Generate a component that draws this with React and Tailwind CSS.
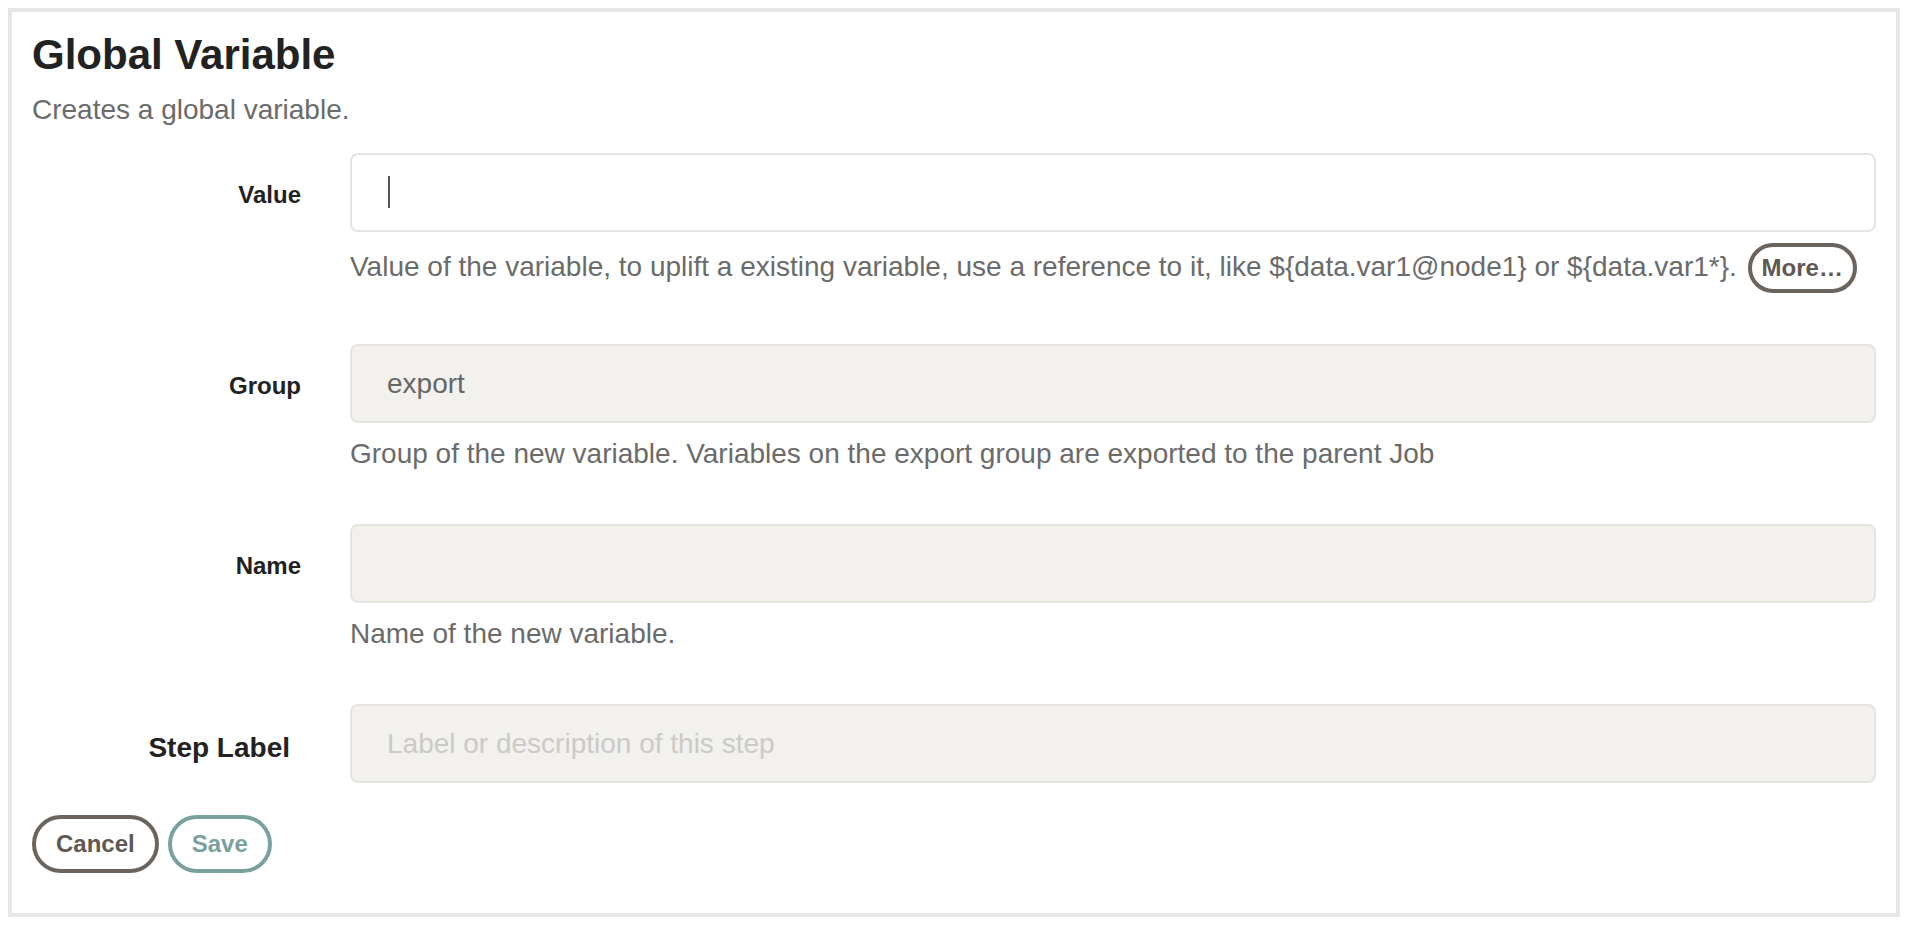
import React from "react";

const FONT = "font-['Liberation_Sans',Arial,sans-serif]";

function Row({ label, labelClass, desc, className = "", children }) {
  return (
    <div className={`flex ${className}`}>
      <div className={`w-[269px] shrink-0 text-right font-bold text-[#222] ${labelClass}`}>{label}</div>
      <div className="ml-[49px] flex-1 min-w-0">
        {children}
        {desc && <div className="mt-[11px] text-[28px] leading-[40px] text-[#6b6b6b]">{desc}</div>}
      </div>
    </div>
  );
}

const inputBase =
  "block w-full h-[79px] rounded-[8px] border-2 border-[#e6e4df] px-[35px] text-[28px] text-[#666] outline-none " +
  FONT;

export default function App() {
  return (
    <div className={`${FONT} bg-white min-h-[926px] pt-[8px] pl-[8px]`}>
      <div className="w-[1892px] h-[909px] border-4 border-[#e6e6e6] px-[20px] pt-[20px]">
        <h1 className="text-[42px] leading-[46px] font-bold text-[#222]">Global Variable</h1>
        <p className="mt-[12px] text-[28px] leading-[40px] text-[#6b6b6b]">Creates a global variable.</p>

        <div className="mt-[23px]">
          <Row
            label="Value"
            labelClass="pt-[27px] text-[24px] leading-[30px]"
            className="mb-[51px]"
            desc={
              <>
                Value of the variable, to uplift a existing variable, use a reference to it, like{" "}
                {"${data.var1@node1}"} or {"${data.var1*}"}.{" "}
                <button className="ml-[3px] inline-block align-baseline rounded-full border-4 border-[#6b645d] px-[10px] py-[6px] text-[24px] leading-[30px] font-bold text-[#5f5852]">
                  More…
                </button>
              </>
            }
          >
            <div className="relative">
              <input className={`${inputBase} bg-white`} defaultValue="" />
              <span className="absolute left-[38px] top-[23px] w-[2px] h-[32px] bg-[#555]" />
            </div>
          </Row>

          <Row
            label="Group"
            labelClass="pt-[27px] text-[24px] leading-[30px]"
            className="mb-[50px]"
            desc="Group of the new variable. Variables on the export group are exported to the parent Job"
          >
            <input className={`${inputBase} bg-[#f2f1ee]`} readOnly value="export" />
          </Row>

          <Row
            label="Name"
            labelClass="pt-[27px] text-[24px] leading-[30px]"
            className="mb-[50px]"
            desc="Name of the new variable."
          >
            <input className={`${inputBase} bg-[#f2f1ee]`} readOnly value="" />
          </Row>

          <Row label="Step Label" labelClass="pt-[24px] pr-[11px] text-[28px] leading-[40px]">
            <input
              className={`${inputBase} bg-[#f2f1ee] placeholder:text-[#cbcac6]`}
              placeholder="Label or description of this step"
            />
          </Row>
        </div>

        <div className="mt-[32px] flex gap-[9px]">
          <button className="rounded-full border-4 border-[#6b645d] px-[20px] py-[10px] text-[24px] leading-[30px] font-bold text-[#5f5852]">
            Cancel
          </button>
          <button className="rounded-full border-4 border-[#7aa0a0] px-[20px] py-[10px] text-[24px] leading-[30px] font-bold text-[#7aa0a0]">
            Save
          </button>
        </div>
      </div>
    </div>
  );
}
